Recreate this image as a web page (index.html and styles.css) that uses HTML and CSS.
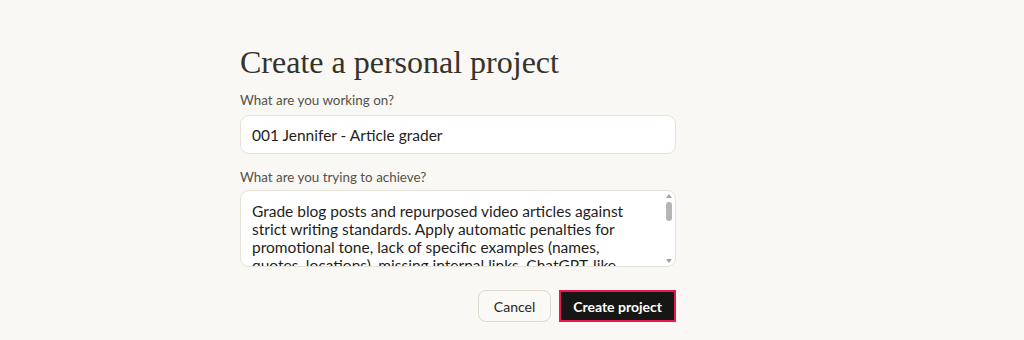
FILE: index.html
```html
<!DOCTYPE html>
<html lang="en">
<head>
    <meta charset="UTF-8">
    <title>Create a personal project</title>
    <link rel="stylesheet" href="styles.css">
</head>
<body>
    <main class="page">
        <form class="project-form">
            <h1 class="title">Create a personal project</h1>

            <label class="field">
                <span class="label">What are you working on?</span>
                <input class="input" type="text" value="001 Jennifer - Article grader">
            </label>

            <label class="field">
                <span class="label label-tight">What are you trying to achieve?</span>
                <span class="textarea-wrap">
                    <textarea class="input textarea" rows="4">Grade blog posts and repurposed video articles against strict writing standards. Apply automatic penalties for promotional tone, lack of specific examples (names, quotes, locations), missing internal links, ChatGPT-like phrasing, and overly long paragraphs. Return a score with notes.</textarea>
                    <span class="scrollbar">
                        <span class="arrow arrow-up"></span>
                        <span class="thumb"></span>
                        <span class="arrow arrow-down"></span>
                    </span>
                </span>
            </label>

            <div class="actions">
                <button type="button" class="btn btn-cancel">Cancel</button>
                <span class="highlight">
                    <button type="button" class="btn btn-create">Create project</button>
                </span>
            </div>
        </form>
    </main>
</body>
</html>
```

FILE: styles.css
```css
* {
    margin: 0;
    padding: 0;
    box-sizing: border-box;
}

body {
    background: #f9f8f4;
    font-family: Lato, "Noto Sans", sans-serif;
    color: #29261b;
}

.page {
    padding: 43px 0 0 240px;
}

.project-form {
    width: 436px;
    display: flex;
    flex-direction: column;
}

.title {
    font-family: "Liberation Serif", "Times New Roman", serif;
    font-weight: 400;
    font-size: 32px;
    line-height: 38px;
    color: #35322a;
    margin-bottom: 10px;
}

.field {
    display: flex;
    flex-direction: column;
    margin-bottom: 14px;
}

.label {
    font-size: 13.4px;
    line-height: 18px;
    color: #54514a;
    margin-bottom: 6px;
}

.label-tight {
    margin-bottom: 4px;
}

.input {
    font-family: Lato, "Noto Sans", sans-serif;
    font-size: 15.5px;
    color: #1f1e1b;
    background: #fff;
    border: 1px solid #e5e2da;
    border-radius: 9px;
    height: 39px;
    padding: 0 11px;
    outline: none;
}

.textarea-wrap {
    position: relative;
    display: block;
}

.textarea {
    display: block;
    width: 100%;
    height: 77px;
    padding: 11px 22px 0 11px;
    line-height: 18px;
    resize: none;
    overflow: hidden;
}

/* drawn scrollbar, sits over the right edge of the textarea */
.scrollbar {
    position: absolute;
    top: 4px;
    right: 2px;
    bottom: 4px;
    width: 10px;
    display: flex;
    flex-direction: column;
    align-items: center;
}

.arrow {
    width: 0;
    height: 0;
    border-left: 3px solid transparent;
    border-right: 3px solid transparent;
}

.arrow-up {
    border-bottom: 4px solid #a3a3a3;
}

.arrow-down {
    margin-top: auto;
    border-top: 4px solid #a3a3a3;
}

.thumb {
    width: 6px;
    height: 19px;
    margin-top: 4px;
    border-radius: 3px;
    background: #b5b5b5;
}

.actions {
    display: flex;
    justify-content: flex-end;
    align-items: center;
    gap: 8px;
    margin-top: 9px;
}

.btn {
    font-family: Lato, "Noto Sans", sans-serif;
    font-size: 14px;
    border-radius: 8px;
    cursor: pointer;
}

.btn-cancel {
    height: 32px;
    padding: 0 15px;
    background: #faf9f6;
    border: 1px solid #ddd9cf;
    color: #29261b;
}

.highlight {
    display: inline-block;
    border: 2px solid #e8194f;
    background: #161614;
}

.btn-create {
    display: block;
    height: 28px;
    padding: 0 12px;
    background: #161614;
    border: none;
    border-radius: 0;
    color: #fff;
    font-weight: 700;
}
```
